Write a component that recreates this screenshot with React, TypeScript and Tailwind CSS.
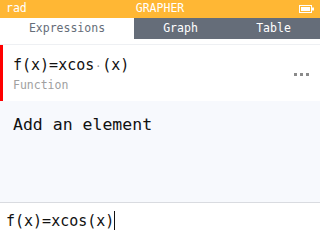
const mono = { fontFamily: '"DejaVu Sans Mono", "Liberation Mono", monospace' };

const tabs = [
  { label: "Expressions", active: true, w: "w-[134px]" },
  { label: "Graph", active: false, w: "w-[93px]" },
  { label: "Table", active: false, w: "w-[93px]" },
];

export default function App() {
  return (
    <div className="w-[320px] h-[240px] flex flex-col bg-white overflow-hidden" style={mono}>
      {/* Title bar */}
      <div className="h-[18px] bg-[#ffb734] flex items-center justify-between px-[6px] text-white text-[11.5px] leading-none relative">
        <span>rad</span>
        <span className="absolute left-0 right-0 text-center">GRAPHER</span>
        <svg width="15" height="8" viewBox="0 0 15 8">
          <rect x="0.5" y="0.5" width="12" height="7" fill="none" stroke="white" />
          <rect x="2" y="2" width="9" height="4" fill="white" />
          <rect x="13" y="2.5" width="2" height="3" fill="white" />
        </svg>
      </div>

      {/* Tabs */}
      <div className="h-[21px] flex bg-[#656d79]">
        {tabs.map((t) => (
          <div
            key={t.label}
            className={`${t.w} flex items-center justify-center text-[11.5px] ${
              t.active ? "bg-white text-[#656d79]" : "text-white"
            }`}
          >
            {t.label}
          </div>
        ))}
      </div>

      {/* List */}
      <div className="flex-1 flex flex-col bg-[#f7f9fd] border-t-[5px] border-white">
        <div className="h-[57px] flex bg-white border-t border-[#eef0f3]">
          <div className="w-[3px] bg-[#ff0000]" />
          <div className="flex-1 pl-[10px] pt-[10px]">
            <div className="text-[15px] leading-[20px] text-[#111]">
              f(x)=xcos<span className="text-[#909090] text-[10px] px-[1px]">·</span>(x)
            </div>
            <div className="text-[11.5px] leading-[14px] text-[#a0a0a0] mt-[1px]">Function</div>
          </div>
          <div className="flex items-center gap-[3px] pr-[11px] pt-[2px]">
            <span className="w-[3px] h-[3px] bg-[#8a8a8a]" />
            <span className="w-[3px] h-[3px] bg-[#8a8a8a]" />
            <span className="w-[3px] h-[3px] bg-[#8a8a8a]" />
          </div>
        </div>
        <div className="pl-[13px] pt-[14px] text-[16.5px] leading-[20px] text-[#111]">Add an element</div>
      </div>

      {/* Input */}
      <div className="h-[38px] border-t border-[#d9dbe0] bg-white flex items-center pl-[6px] pb-[2px]">
        <span className="text-[15px] leading-[20px] text-[#111]">f(x)=xcos(x)</span>
        <span className="w-[1px] h-[19px] bg-[#111]" />
      </div>
    </div>
  );
}
